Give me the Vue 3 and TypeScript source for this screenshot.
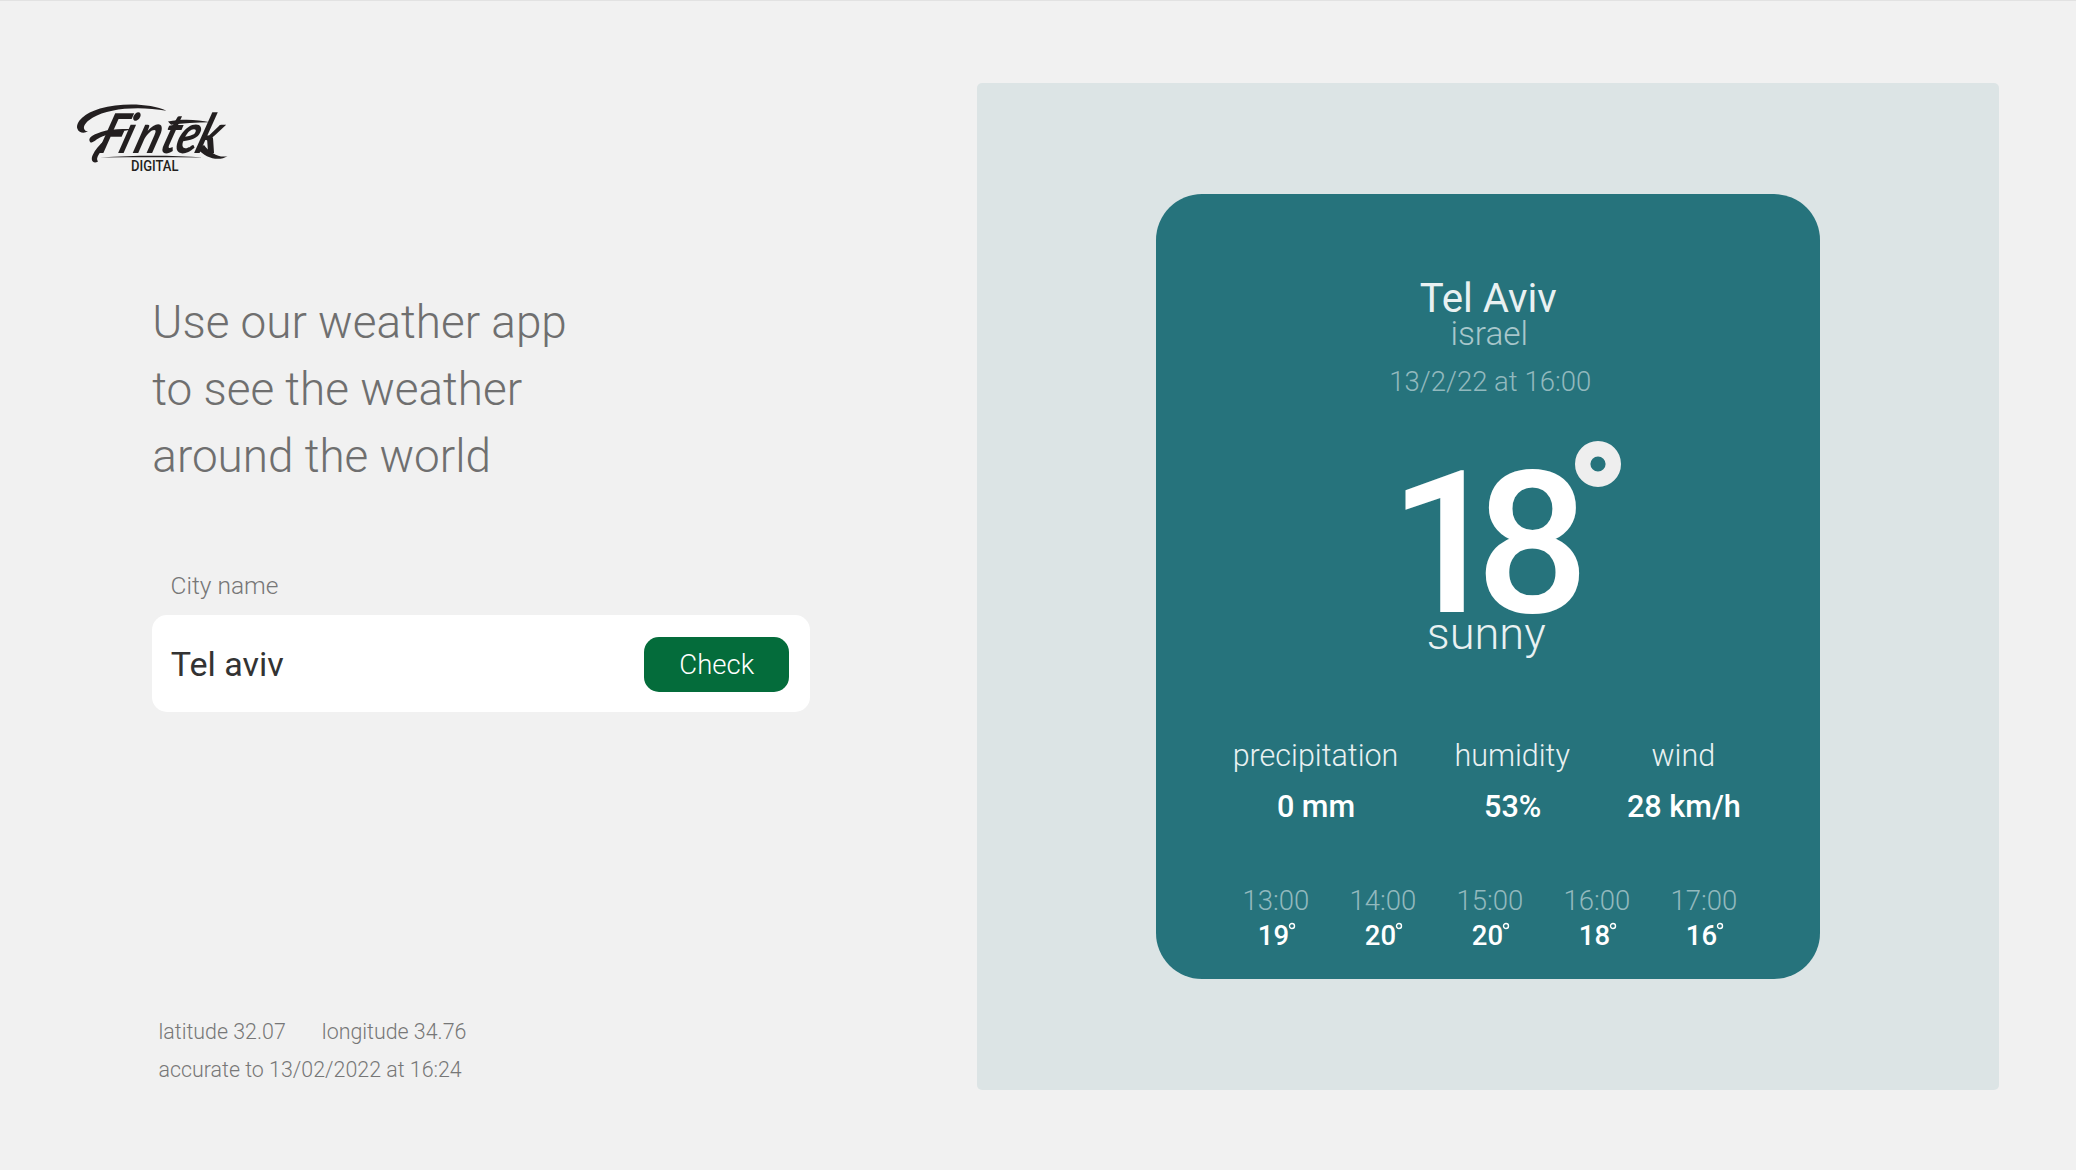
<script setup lang="ts">
interface Metric {
  label: string
  value: string
}
interface Hour {
  time: string
  temp: number
}

const headline: string[] = ['Use our weather app', 'to see the weather', 'around the world']

const metrics: Metric[] = [
  { label: 'precipitation', value: '0 mm' },
  { label: 'humidity', value: '53%' },
  { label: 'wind', value: '28 km/h' },
]

const hours: Hour[] = [
  { time: '13:00', temp: 19 },
  { time: '14:00', temp: 20 },
  { time: '15:00', temp: 20 },
  { time: '16:00', temp: 18 },
  { time: '17:00', temp: 16 },
]
</script>

<template>
  <div class="page">
    <section class="left">
      <svg class="logo" width="160" height="75" viewBox="0 0 160 75">
        <path
          d="M90.5 10.8 C75 3.5 46 2.5 24 8.5 C9 13 -1 22 1.5 29 C3 33 8 33.5 12 31.5 C6 30.5 6 24 17 17.5 C32 8.5 62 5.5 90.5 10.8 Z"
          fill="#231f20"
        />
        <path d="M14.5 42.5 C11 38 16 35 25 32 C35 29 46 28.5 56 29.5 C45 31 31 34 24 37.5 C19 40 18 42.5 14.5 42.5 Z" fill="#231f20" />
        <path d="M30 46 C24 52 19 58 22 61.5 C17 64.5 14 60 17 54.5 C19 50 23 45 29 40 Z" fill="#231f20" />
        <path d="M92 21.5 C106 18.5 122 19.5 134 22.2 C120 22.3 107 23 95 24.8 Z" fill="#231f20" />
        <path d="M128 45 C134 53 144 58.5 151.5 56 C143 62 129 58 122 49 Z" fill="#231f20" />
        <path d="M24 57.6 C60 55 95 55 128 57.6 C95 57.2 60 57.2 24 57.6 Z" fill="#231f20" />
        <g transform="translate(0 53) skewX(-19) scale(.82 1)">
          <text class="word" x="24 50 68 100 118 143" y="0">Fintek</text>
        </g>
        <text class="sub" x="55" y="70.6" textLength="47.5" lengthAdjust="spacingAndGlyphs">DIGITAL</text>
      </svg>

      <h1 class="headline">
        <span v-for="line in headline" :key="line">{{ line }}</span>
      </h1>

      <label class="label">City name</label>
      <div class="field">
        <span class="city">Tel aviv</span>
        <button class="check" type="button">Check</button>
      </div>

      <footer class="meta">
        <div class="coords"><span>latitude 32.07</span><span>longitude 34.76</span></div>
        <div class="accurate">accurate to 13/02/2022 at 16:24</div>
      </footer>
    </section>

    <section class="panel">
      <article class="card">
        <div class="name">Tel Aviv</div>
        <div class="country">israel</div>
        <div class="date">13/2/22 at 16:00</div>
        <div class="temp">
          <span class="digits">18</span>
          <svg class="degree" width="46" height="46" viewBox="0 0 46 46">
            <circle cx="23" cy="23" r="15.3" fill="none" stroke="#eee" stroke-width="15.4" />
          </svg>
        </div>
        <div class="sky">sunny</div>
        <div class="metrics">
          <div v-for="m in metrics" :key="m.label" class="metric">
            <span class="m-label">{{ m.label }}</span>
            <span class="m-value">{{ m.value }}</span>
          </div>
        </div>
        <div class="hours">
          <div v-for="h in hours" :key="h.time" class="hour">
            <span class="h-time">{{ h.time }}</span>
            <span class="h-temp">
              {{ h.temp }}
              <svg class="dot" width="8" height="8" viewBox="0 0 8 8">
                <circle cx="4" cy="4" r="2.5" fill="none" stroke="#fff" stroke-width="1.4" />
              </svg>
            </span>
          </div>
        </div>
      </article>
    </section>
  </div>
</template>

<style>
body {
  margin: 0;
  background: #f1f1f1;
}
</style>

<style scoped>
.page {
  box-sizing: border-box;
  width: 2076px;
  height: 1170px;
  display: flex;
  background: #f1f1f1;
  border-top: 1px solid #e2e2e2;
  font-family: Roboto, 'Liberation Sans', sans-serif;
  font-weight: 300;
  overflow: hidden;
}
.left {
  width: 977px;
  display: flex;
  flex-direction: column;
  align-items: flex-start;
}
.logo {
  display: block;
  margin: 99px 0 0 76px;
  overflow: visible;
}
.word {
  font: italic 700 55px Lato, sans-serif;
  fill: #231f20;
}
.sub {
  font: 500 13.8px Roboto, sans-serif;
  fill: #231f20;
}
.headline {
  margin: 114px 0 0 152.3px;
  font-size: 45.87px;
  font-weight: 300;
  line-height: 67px;
  color: #6f6f6f;
  white-space: nowrap;
}
.headline span {
  display: block;
}
.label {
  margin: 79.3px 0 0 170.5px;
  font-size: 24.5px;
  line-height: 34px;
  color: #777;
}
.field {
  box-sizing: border-box;
  width: 658px;
  height: 96.5px;
  margin: 12px 0 0 152.3px;
  padding: 1px 21px 0 18.5px;
  display: flex;
  align-items: center;
  justify-content: space-between;
  background: #fff;
  border-radius: 15px;
}
.city {
  font-size: 34.1px;
  font-weight: 400;
  color: #333;
}
.check {
  width: 145px;
  height: 55px;
  padding: 0;
  border: 0;
  border-radius: 15px;
  background: #046c3b;
  color: #fff;
  font: 300 27.5px Roboto, sans-serif;
}
.meta {
  margin: 301.2px 0 0 158.5px;
  font-size: 21.4px;
  line-height: 38px;
  color: #777;
  white-space: nowrap;
}
.coords {
  display: flex;
  gap: 36px;
}
.panel {
  width: 1021.5px;
  height: 1007.5px;
  margin-top: 81.5px;
  display: flex;
  justify-content: center;
  align-items: center;
  background: #dce4e5;
  border-radius: 5px;
}
.card {
  box-sizing: border-box;
  width: 664px;
  height: 785px;
  padding-top: 81px;
  display: flex;
  flex-direction: column;
  align-items: center;
  background: #26737c;
  border-radius: 46px;
  color: #fff;
  white-space: nowrap;
}
.name {
  height: 42px;
  padding-left: 1px;
  line-height: 48px;
  font-size: 40.2px;
  font-weight: 400;
  color: #e9f1f2;
}
.country {
  height: 34px;
  padding-left: 3px;
  line-height: 34px;
  font-size: 33.4px;
  color: #a8c7cb;
}
.date {
  margin-top: 11px;
  height: 40px;
  padding-left: 5px;
  line-height: 40px;
  font-size: 27.5px;
  color: #92b9be;
}
.temp {
  position: relative;
  margin-top: 57.7px;
  height: 149px;
  padding-right: 24px;
  line-height: 170px;
}
.digits {
  font-size: 199.3px;
  font-weight: 500;
  letter-spacing: -26.5px;
}
.degree {
  position: absolute;
  top: -18.3px;
  left: 186.5px;
}
.sky {
  height: 50px;
  padding-right: 3px;
  line-height: 51px;
  font-size: 45.2px;
  color: #e9f1f2;
}
.metrics {
  margin-top: 72.5px;
  padding-right: 2px;
  display: flex;
  gap: 56px;
}
.metric {
  display: flex;
  flex-direction: column;
  align-items: center;
}
.m-label {
  font-size: 30.5px;
  line-height: 50px;
  color: #e9f1f2;
}
.m-value {
  padding-left: 1px;
  font-size: 30.6px;
  font-weight: 500;
  line-height: 51px;
}
.hours {
  margin-top: 51px;
  padding-left: 4.4px;
  display: flex;
  gap: 40px;
}
.hour {
  width: 67px;
  display: flex;
  flex-direction: column;
  align-items: center;
}
.h-time {
  font-size: 27.5px;
  line-height: 35px;
  color: #92b9be;
}
.h-temp {
  position: relative;
  padding-right: 5px;
  font-size: 27.5px;
  font-weight: 500;
  line-height: 35px;
}
.dot {
  position: absolute;
  top: 4px;
  right: -1.5px;
}
</style>
